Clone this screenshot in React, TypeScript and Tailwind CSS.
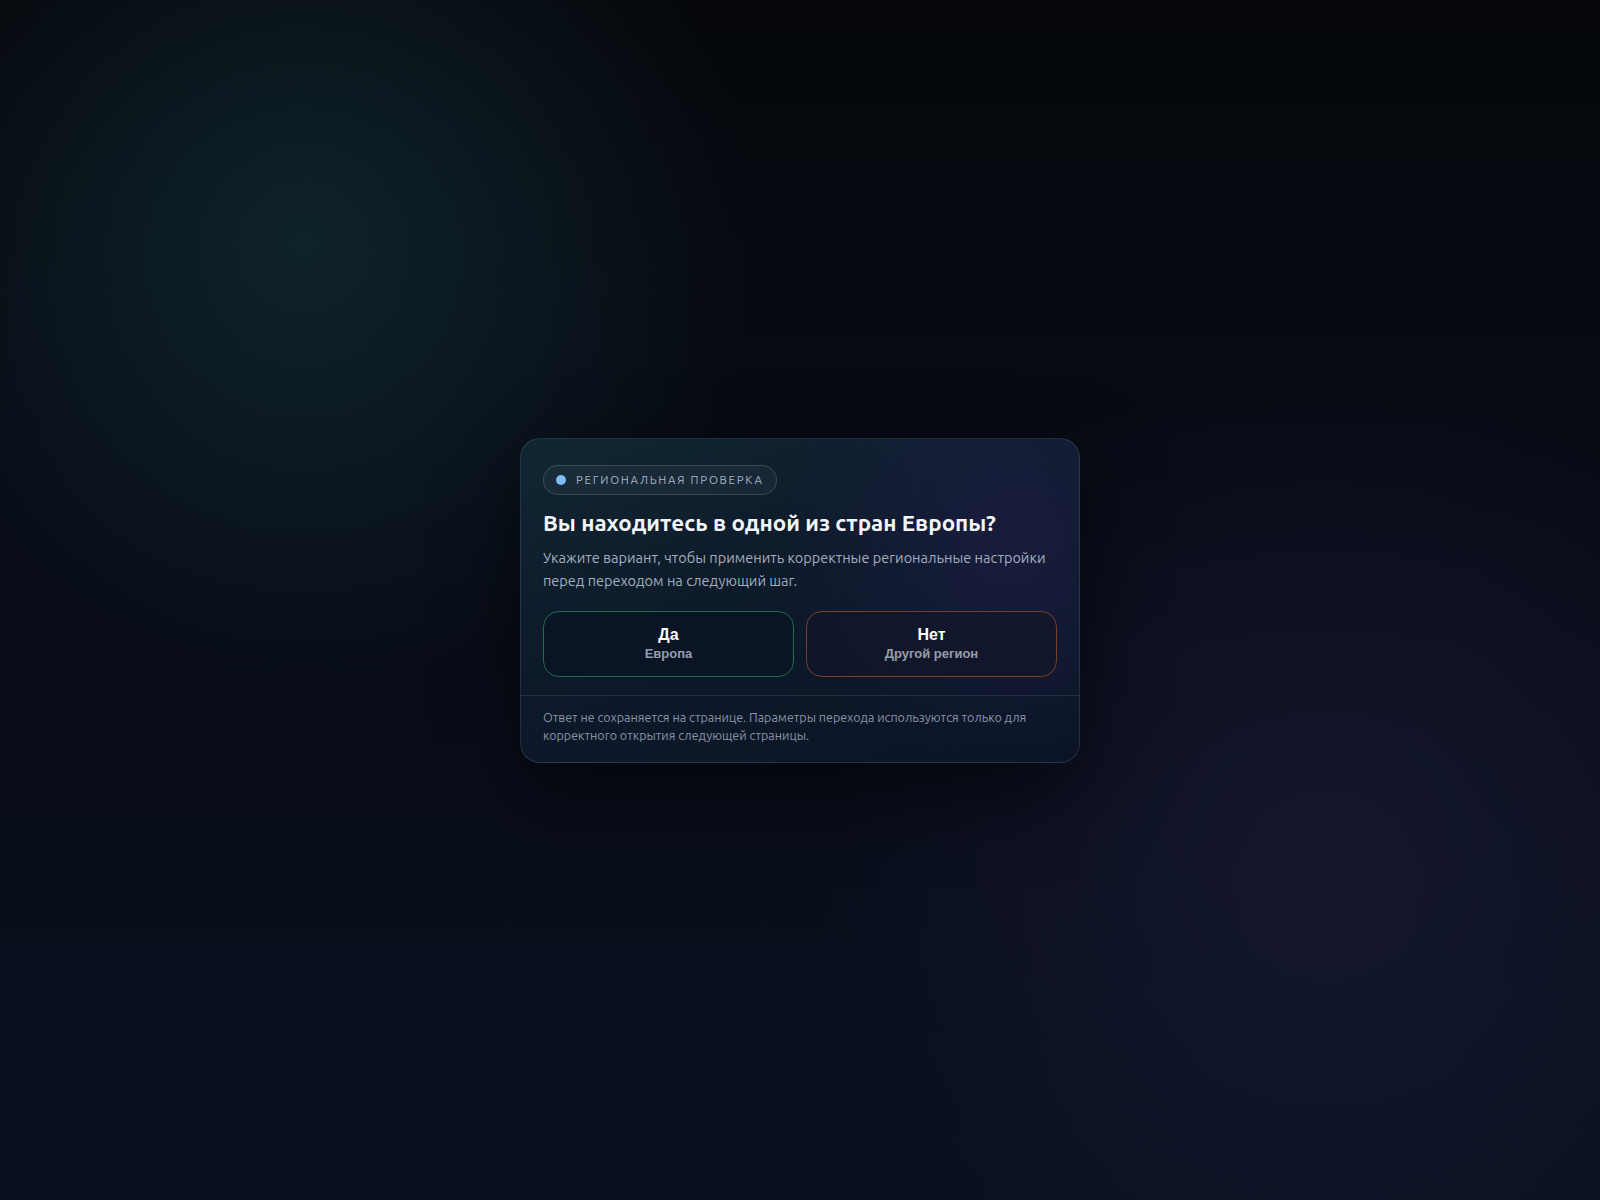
export default function App() {
  return (
    <div className="flex min-h-screen w-full items-center justify-center bg-[#080d18] bg-[radial-gradient(circle_at_19%_20%,rgba(22,56,66,0.55),transparent_28%),radial-gradient(circle_at_83%_72%,rgba(34,34,70,0.45),transparent_32%),linear-gradient(180deg,#05070b_0%,#080c16_45%,#0a1020_100%)] font-['Ubuntu','Noto_Sans',sans-serif]">
      <div className="w-[560px] overflow-hidden rounded-[20px] border border-white/10 bg-[#0c1526] bg-[radial-gradient(circle_at_88%_32%,rgba(36,32,80,0.5),transparent_42%),linear-gradient(160deg,#112633_0%,#0d1a2a_45%,#0b1426_100%)] shadow-[0_30px_80px_rgba(0,0,0,0.55)]">
        <div className="px-[22px] pt-[26px] pb-[18px]">
          <div className="inline-flex h-[30px] items-center gap-[10px] rounded-full border border-white/15 bg-white/[0.04] pl-[12px] pr-[12px]">
            <span className="h-[10px] w-[10px] rounded-full bg-[#7cbcf8]" />
            <span className="text-[11.5px] uppercase tracking-[0.15em] text-[#a9b3c3]">Региональная проверка</span>
          </div>

          <h1 className="mt-[14px] text-[22.4px] font-bold leading-[28px] text-[#f3f6fa]">
            Вы находитесь в одной из стран Европы?
          </h1>
          <p className="mt-[9px] text-[14.5px] leading-[23px] text-[#a3adbd]">
            Укажите вариант, чтобы применить корректные региональные настройки перед переходом на следующий шаг.
          </p>

          <div className="mt-[19px] grid grid-cols-2 gap-[12px]">
            <button className="flex h-[66px] flex-col items-center justify-center rounded-[16px] border border-[#1f6d4a] bg-[#0a1322]/70 font-['Liberation_Sans',Arial,sans-serif]">
              <span className="text-[16px] font-bold leading-[20px] text-white">Да</span>
              <span className="text-[13px] font-bold leading-[17px] text-[#949eae]">Европа</span>
            </button>
            <button className="flex h-[66px] flex-col items-center justify-center rounded-[16px] border border-[#7a3d26] bg-[#121629]/70 font-['Liberation_Sans',Arial,sans-serif]">
              <span className="text-[16px] font-bold leading-[20px] text-white">Нет</span>
              <span className="text-[13px] font-bold leading-[17px] text-[#949eae]">Другой регион</span>
            </button>
          </div>
        </div>

        <div className="border-t border-white/10 px-[22px] pt-[12px] pb-[18px]">
          <p className="text-[12.5px] leading-[18px] text-[#8a94a6]">
            Ответ не сохраняется на странице. Параметры перехода используются только для корректного открытия следующей страницы.
          </p>
        </div>
      </div>
    </div>
  );
}
